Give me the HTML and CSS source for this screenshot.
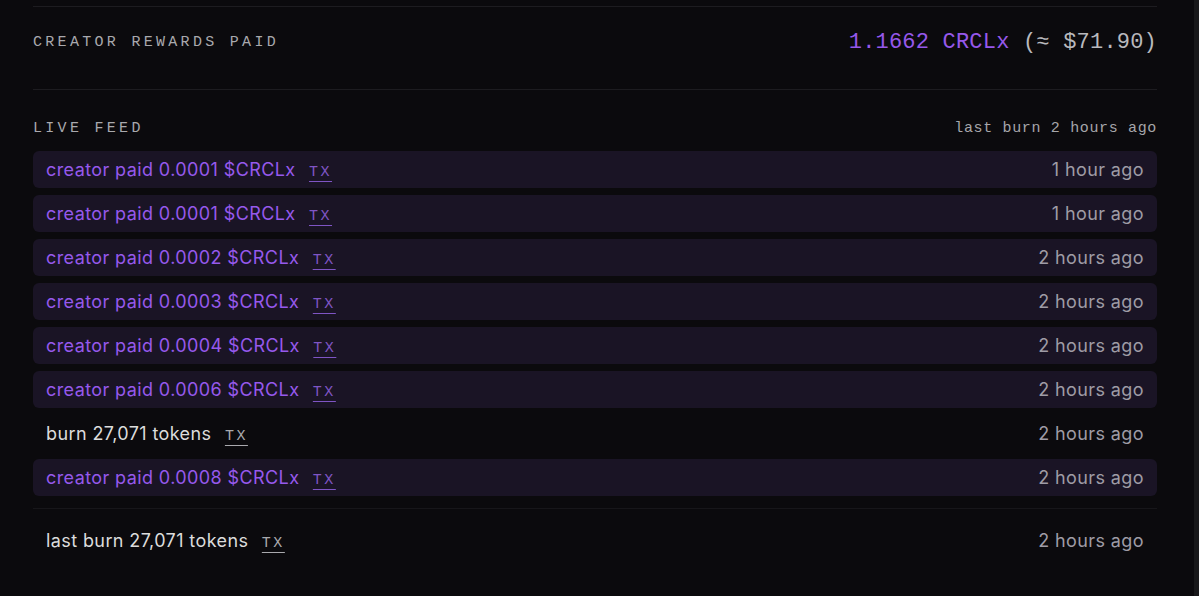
FILE: index.html
```html
<!DOCTYPE html>
<html>
<head>
<meta charset="utf-8">
<link rel="stylesheet" href="styles.css">
</head>
<body>
<div class="frame">
  <div class="panel">
    <div class="rewards">
      <span class="label">CREATOR REWARDS PAID</span>
      <span class="value"><span class="amt">1.1662 CRCLx</span> <span class="usd">(≈ $71.90)</span></span>
    </div>
    <div class="feed-head">
      <span class="label">LIVE FEED</span>
      <span class="last">last burn 2 hours ago</span>
    </div>
    <ul class="feed">
      <li class="row pay"><span class="what">creator paid 0.0001 $CRCLx <a class="tx">TX</a></span><span class="time">1 hour ago</span></li>
      <li class="row pay"><span class="what">creator paid 0.0001 $CRCLx <a class="tx">TX</a></span><span class="time">1 hour ago</span></li>
      <li class="row pay"><span class="what">creator paid 0.0002 $CRCLx <a class="tx">TX</a></span><span class="time">2 hours ago</span></li>
      <li class="row pay"><span class="what">creator paid 0.0003 $CRCLx <a class="tx">TX</a></span><span class="time">2 hours ago</span></li>
      <li class="row pay"><span class="what">creator paid 0.0004 $CRCLx <a class="tx">TX</a></span><span class="time">2 hours ago</span></li>
      <li class="row pay"><span class="what">creator paid 0.0006 $CRCLx <a class="tx">TX</a></span><span class="time">2 hours ago</span></li>
      <li class="row burn"><span class="what">burn 27,071 tokens <a class="tx">TX</a></span><span class="time">2 hours ago</span></li>
      <li class="row pay"><span class="what">creator paid 0.0008 $CRCLx <a class="tx">TX</a></span><span class="time">2 hours ago</span></li>
    </ul>
    <div class="footer row burn">
      <span class="what">last burn 27,071 tokens <a class="tx">TX</a></span><span class="time">2 hours ago</span>
    </div>
  </div>
</div>
</body>
</html>
```
FILE: styles.css
```css
html, body {
  margin: 0;
  padding: 0;
  background: #18181a;
  height: 100%;
}
body {
  font-family: "Inter", "Noto Sans", sans-serif;
  color: #d6d6d6;
}
.frame {
  height: 596px;
  width: 1194px;
  background: #0b0a0d;
  box-sizing: border-box;
  padding: 6px 0 0 33px;
}
.panel {
  width: 1124px;
  border-top: 1px solid #1d1c20;
}
.rewards {
  display: flex;
  justify-content: space-between;
  align-items: center;
  height: 70px;
  padding-bottom: 12px;
  border-bottom: 1px solid #1d1c20;
}
.label {
  font-family: "Liberation Mono", "DejaVu Sans Mono", monospace;
  font-size: 15px;
  letter-spacing: 3.3px;
  color: #a9a9ad;
}
.value {
  font-family: "Liberation Mono", "DejaVu Sans Mono", monospace;
  font-size: 22px;
  letter-spacing: 0.2px;
}
.amt { color: #9658ea; }
.usd { color: #b9b9bd; }
.feed-head {
  display: flex;
  justify-content: space-between;
  align-items: center;
  margin-top: 28px;
  height: 20px;
}
.last {
  font-family: "Liberation Mono", "DejaVu Sans Mono", monospace;
  font-size: 15px;
  letter-spacing: 0.65px;
  color: #a6a6aa;
}
.feed {
  list-style: none;
  margin: 13px 0 0;
  padding: 0;
  display: flex;
  flex-direction: column;
  gap: 7px;
}
.row {
  display: flex;
  justify-content: space-between;
  align-items: center;
  height: 37px;
  padding: 0 13px;
  border-radius: 6px;
  font-size: 18px;
  letter-spacing: 0.4px;
}
.pay {
  background: #1a1425;
}
.pay .what { color: #9659ec; }
.burn .what { color: #dcdcdc; }
.time { color: #9f9ca6; }
.tx {
  font-family: "Liberation Mono", "DejaVu Sans Mono", monospace;
  font-size: 15px;
  letter-spacing: 2.5px;
  margin-left: 8px;
  text-decoration: underline;
  text-underline-offset: 5px;
  text-decoration-thickness: 1px;
}
.pay .tx { color: #7f55c4; }
.burn .tx { color: #a9a9ad; }
.footer {
  margin-top: 12px;
  border-top: 1px solid #17161a;
  border-radius: 0;
  height: 63px;
}
```
